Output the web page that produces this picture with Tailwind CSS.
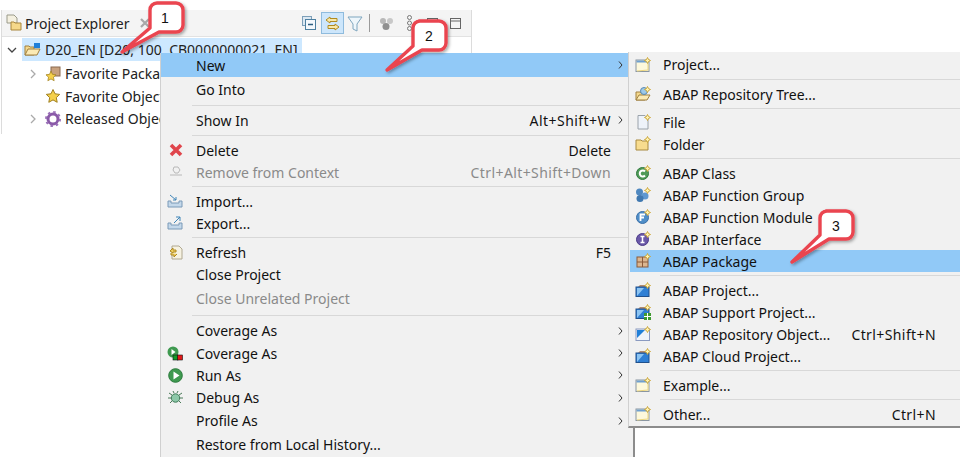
<!doctype html>
<html><head><meta charset="utf-8"><script src="https://cdn.jsdelivr.net/npm/@tailwindcss/browser@4"></script></head>
<body class="bg-white">
<svg width="0" height="0" class="absolute">
<defs>
<symbol id="plus" viewBox="0 0 16 16"><path d="M12.500 0.500l1 2 2 1-2 1-1 2-1-2-2-1 2-1z" fill="#fff3b0" stroke="#c8a030" stroke-width=".9"/></symbol>
<symbol id="win" viewBox="0 0 16 16"><rect x="1" y="3" width="13" height="11.500" fill="#fdf8dc" stroke="#8a96a2"/><rect x="1.500" y="3.500" width="12" height="2" fill="#6f9fd0"/><path d="M2 14l11-1V7" fill="none" stroke="#ecd680"/><use href="#plus"/></symbol>
<symbol id="bluebox" viewBox="0 0 16 16"><path d="M3 5l2-2h7l1 2z" fill="#b08a70"/><rect x="1" y="5" width="13" height="9.500" fill="#2f7fd4" stroke="#20508c"/><path d="M2 14V6h7z" fill="#8cc4f2"/><use href="#plus"/></symbol>
<symbol id="star" viewBox="0 0 16 16"><path d="M8 1.500l2 4.300 4.700.6-3.400 3.200.9 4.700L8 11.900l-4.200 2.400.9-4.700L1.300 6.400 6 5.800z" fill="#f5d04a" stroke="#a08020"/></symbol>
</defs>
</svg>

<main class="relative w-[960px] h-[457px] overflow-hidden font-['Noto_Sans',sans-serif] text-[14px] text-[#111] bg-white">
  <section class="w-[471px] mt-[10px] ml-[1px] border-l border-r border-[#dcdcdc]">
    <header class="h-[27px] bg-[#f4f4f4] flex items-center pl-[2px] border-b border-[#e2e2e2]">
      <svg width="18" height="18" viewBox="0 0 18 18" class="ml-[1px] shrink-0"><path d="M2 1h7l3 3v5H2z" fill="#f4f0e0" stroke="#9a9a8a"/><path d="M6 8h3l1 1h6v7H6z" fill="#f5d88a" stroke="#a8863c"/></svg>
      <span class="ml-[2px] text-[#222] whitespace-nowrap w-[108px]">Project Explorer</span>
      <svg width="12" height="12" viewBox="0 0 12 12" class="ml-[6px] shrink-0"><path d="M2 2l8 8M10 2l-8 8" stroke="#a8a8a8" stroke-width="2.200"/></svg>
      <div class="flex items-center ml-[151px] h-[22px]">
        <svg width="14" height="14" viewBox="0 0 14 14"><rect x=".5" y=".5" width="9" height="9" fill="#dce8f2" stroke="#7d9fb8"/><rect x="3.500" y="3.500" width="10" height="10" fill="#f4f8fc" stroke="#4d7fa0"/><path d="M6 8.500h5" stroke="#2f5f80" stroke-width="1.500"/></svg>
        <div class="ml-[5px] w-[23px] h-[22px] bg-[#cde6fb] border border-[#8fbbdd] flex items-center justify-center">
          <svg width="17" height="17" viewBox="0 0 17 17"><path d="M6 2L2 5l4 3V6.500h7v-3H6zM11 9l4 3-4 3v-1.500H4v-3h7z" fill="#f8e8a8" stroke="#b08a20"/></svg>
        </div>
        <svg width="16" height="17" viewBox="0 0 16 17" class="ml-[3px]"><path d="M1 2h14L10 9v7l-4-2V9z" fill="#eef6fb" stroke="#7fa6bf"/></svg>
        <div class="w-px h-[18px] bg-[#9a9a9a] ml-[6px]"></div>
        <svg width="16" height="15" viewBox="0 0 16 15" class="ml-[9px]"><circle cx="4" cy="5" r="3" fill="#b8b8b8"/><circle cx="11" cy="5" r="3" fill="#c8c8c8"/><circle cx="7" cy="10.500" r="3.500" fill="#909090"/></svg>
        <svg width="7" height="16" viewBox="0 0 7 16" class="ml-[11px]"><circle cx="3.500" cy="2.500" r="2" fill="none" stroke="#777"/><circle cx="3.500" cy="8" r="2" fill="none" stroke="#777"/><circle cx="3.500" cy="13.500" r="2" fill="none" stroke="#777"/></svg>
        <svg width="11" height="11" viewBox="0 0 11 11" class="ml-[14px]"><rect x=".5" y=".5" width="10" height="10" fill="none" stroke="#666"/><path d="M1 3h9" stroke="#666"/></svg>
        <svg width="11" height="11" viewBox="0 0 11 11" class="ml-[12px]"><rect x=".5" y=".5" width="10" height="10" fill="none" stroke="#666"/><path d="M1 3h9" stroke="#666"/></svg>
      </div>
    </header>
    <div class="bg-white h-[97px] pt-px">
      <div class="flex items-center h-[23px] w-[280px] ml-[20px] bg-[#cde8ff]">
        <span class="-ml-[15px] w-[15px] flex"><svg width="10" height="6" viewBox="0 0 10 6"><path d="M1 1l4 4 4-4" fill="none" stroke="#444" stroke-width="1.300"/></svg></span>
        <svg width="17" height="15" viewBox="0 0 17 15" class="ml-[2px]"><path d="M1 13V4h4l1 1h4v8z" fill="#f4d88c" stroke="#a08040"/><path d="M1 13l3-6h12l-3 6z" fill="#fbeab4" stroke="#a08040"/><path d="M10 1h6v5h-6z" fill="#1f7fd8"/></svg>
        <span class="ml-[4px] whitespace-nowrap text-[#222]">D20_EN [D20, 100, CB0000000021, EN]</span>
      </div>
      <div class="flex items-center h-[23px] ml-[28px] mt-[1px]">
        <svg width="6" height="10" viewBox="0 0 6 10"><path d="M1 1l4 4-4 4" fill="none" stroke="#aaa" stroke-width="1.300"/></svg>
        <svg width="16" height="16" viewBox="0 0 16 16" class="ml-[9px]"><rect x="6" y="1" width="9" height="9" fill="#c9a27e" stroke="#8a6a50"/><use href="#star" width="12" height="12" y="4"/></svg>
        <span class="ml-[4px] text-[#222]">Favorite Packages</span>
      </div>
      <div class="flex items-center h-[22px] ml-[43px]">
        <svg width="16" height="16"><use href="#star"/></svg>
        <span class="ml-[4px] text-[#222]">Favorite Objects</span>
      </div>
      <div class="flex items-center h-[23px] ml-[28px]">
        <svg width="6" height="10" viewBox="0 0 6 10"><path d="M1 1l4 4-4 4" fill="none" stroke="#aaa" stroke-width="1.300"/></svg>
        <svg width="16" height="16" viewBox="0 0 16 16" class="ml-[9px]"><circle cx="8" cy="8" r="5" fill="none" stroke="#8a5aa8" stroke-width="3"/><circle cx="8" cy="8" r="7" fill="none" stroke="#9a70b8" stroke-width="2" stroke-dasharray="2.500 3"/></svg>
        <span class="ml-[4px] text-[#222]">Released Objects</span>
      </div>
    </div>
  </section>

  <!-- main context menu -->
  <nav class="absolute left-[160px] top-[53px] w-[475px] h-[420px] bg-[#f1f1f1] border-l border-r-2 border-l-[#d0d0d0] border-r-[#8c8c8c]">
    <div class="flex items-center h-[24px] bg-[#91c9f7] pr-[10px]"><span class="pl-[35px] flex-1">New</span><svg width="5" height="8" viewBox="0 0 5 8"><path d="M1 .5l3 3.500-3 3.500" fill="none" stroke="#333"/></svg></div>
    <div class="flex items-center h-[24px]"><span class="pl-[35px]">Go Into</span></div>
    <div class="h-[8px] flex items-center pl-[31px]"><div class="h-px w-full bg-[#d8d8d8]"></div></div>
    <div class="flex items-center h-[22px] pr-[10px]"><span class="pl-[35px] flex-1">Show In</span><span class="mr-[7px] tracking-[.45px]">Alt+Shift+W</span><svg width="5" height="8" viewBox="0 0 5 8"><path d="M1 .5l3 3.500-3 3.500" fill="none" stroke="#333"/></svg></div>
    <div class="h-[8px] flex items-center pl-[31px]"><div class="h-px w-full bg-[#d8d8d8]"></div></div>
    <div class="flex items-center h-[22px] pr-[22px]"><svg width="14" height="14" viewBox="0 0 14 14" class="ml-[8px]"><path d="M2 2l10 10M12 2L2 12" stroke="#e0454c" stroke-width="3.600"/></svg><span class="pl-[13px] flex-1">Delete</span><span>Delete</span></div>
    <div class="flex items-center h-[22px] pr-[22px] text-[#8a8a8a]"><svg width="14" height="14" viewBox="0 0 14 14" class="ml-[8px]"><path d="M5 2h4l2 3-2 3H6L4 5zM1 10h12" fill="none" stroke="#b8b8b8"/></svg><span class="pl-[13px] flex-1">Remove from Context</span><span class="tracking-[.4px]">Ctrl+Alt+Shift+Down</span></div>
    <div class="h-[7px] flex items-center pl-[31px]"><div class="h-px w-full bg-[#d8d8d8]"></div></div>
    <div class="flex items-center h-[22px]"><svg width="16" height="14" viewBox="0 0 16 14" class="ml-[6px]"><path d="M1 7v6h14V7h-3v2H4V7z" fill="#c4d8ea" stroke="#7a9ab8"/><path d="M3 1l6 5M9 3v3H6" fill="none" stroke="#3f85b8"/></svg><span class="pl-[13px]">Import...</span></div>
    <div class="flex items-center h-[22px]"><svg width="16" height="14" viewBox="0 0 16 14" class="ml-[6px]"><path d="M1 7v6h14V7h-3v2H4V7z" fill="#c4d8ea" stroke="#7a9ab8"/><path d="M7 7l6-6M9 1h4v4" fill="none" stroke="#3f85b8"/></svg><span class="pl-[13px]">Export...</span></div>
    <div class="h-[7px] flex items-center pl-[31px]"><div class="h-px w-full bg-[#d8d8d8]"></div></div>
    <div class="flex items-center h-[22px] pr-[22px]"><svg width="15" height="15" viewBox="0 0 15 15" class="ml-[7px]"><path d="M4 1h7l3 3v10H4z" fill="#f6f2e2" stroke="#b0a890"/><path d="M2 6l3-3v2h3v2H5v1zM9 9l-3 3v-2H3V8" fill="#f0cf60" stroke="#b08a20"/></svg><span class="pl-[13px] flex-1">Refresh</span><span>F5</span></div>
    <div class="flex items-center h-[23px]"><span class="pl-[35px]">Close Project</span></div>
    <div class="flex items-center h-[25px] text-[#8a8a8a]"><span class="pl-[35px]">Close Unrelated Project</span></div>
    <div class="h-[8px] flex items-center pl-[31px]"><div class="h-px w-full bg-[#d8d8d8]"></div></div>
    <div class="flex items-center h-[23px] pr-[10px]"><span class="pl-[35px] flex-1">Coverage As</span><svg width="5" height="8" viewBox="0 0 5 8"><path d="M1 .5l3 3.500-3 3.500" fill="none" stroke="#333"/></svg></div>
    <div class="flex items-center h-[22px] pr-[10px]"><svg width="16" height="15" viewBox="0 0 16 15" class="ml-[6px]"><circle cx="6" cy="6" r="5.500" fill="#3f9a50"/><path d="M4.500 3v6l4-3z" fill="#fff"/><rect x="6" y="9" width="5" height="5" fill="#139a2a" stroke="#111" stroke-width=".6"/><rect x="10.500" y="9" width="5" height="5" fill="#e01818" stroke="#111" stroke-width=".6"/></svg><span class="pl-[13px] flex-1">Coverage As</span><svg width="5" height="8" viewBox="0 0 5 8"><path d="M1 .5l3 3.500-3 3.500" fill="none" stroke="#333"/></svg></div>
    <div class="flex items-center h-[22px] pr-[10px]"><svg width="15" height="15" viewBox="0 0 15 15" class="ml-[7px]"><circle cx="7.500" cy="7.500" r="6.800" fill="#3f9a50" stroke="#2a7a3c"/><path d="M5.500 3.500v8l6-4z" fill="#fff"/></svg><span class="pl-[13px] flex-1">Run As</span><svg width="5" height="8" viewBox="0 0 5 8"><path d="M1 .5l3 3.500-3 3.500" fill="none" stroke="#333"/></svg></div>
    <div class="flex items-center h-[23px] pr-[10px]"><svg width="15" height="15" viewBox="0 0 15 15" class="ml-[7px]"><path d="M1 3l3 2M14 3l-3 2M0 8h3M15 8h-3M2 13l2-2M13 13l-2-2M5 1l1 2M10 1L9 3" stroke="#4a7a58"/><circle cx="7.500" cy="8" r="4.200" fill="#8cc8a8" stroke="#3f7a58"/></svg><span class="pl-[13px] flex-1">Debug As</span><svg width="5" height="8" viewBox="0 0 5 8"><path d="M1 .5l3 3.500-3 3.500" fill="none" stroke="#333"/></svg></div>
    <div class="flex items-center h-[23px] pr-[10px]"><span class="pl-[35px] flex-1">Profile As</span><svg width="5" height="8" viewBox="0 0 5 8"><path d="M1 .5l3 3.500-3 3.500" fill="none" stroke="#333"/></svg></div>
    <div class="flex items-center h-[24px]"><span class="pl-[35px]">Restore from Local History...</span></div>
  </nav>

  <!-- submenu -->
  <nav class="absolute left-[628px] top-[52px] w-[332px] h-[376px] bg-[#f1f1f1] border-l border-b-2 border-l-[#d0d0d0] border-b-[#8c8c8c] pt-[2px]">
    <div class="flex items-center h-[22px]"><svg width="16" height="16" class="ml-[6px]"><use href="#win"/></svg><span class="pl-[12px] -mt-[1px]">Project...</span></div>
    <div class="h-[7px] flex items-center pl-[31px]"><div class="h-px w-full bg-[#d8d8d8]"></div></div>
    <div class="flex items-center h-[22px]"><svg width="16" height="16" viewBox="0 0 16 16" class="ml-[6px]"><path d="M1 14V6h4l1 1h4v7z" fill="#f4d88c" stroke="#a08040"/><path d="M1 14l3-5h11l-3 5z" fill="#fbeab4" stroke="#a08040"/><circle cx="9" cy="5" r="3.500" fill="#9cc8ea" stroke="#5a8ab0"/><use href="#plus"/></svg><span class="pl-[12px]">ABAP Repository Tree...</span></div>
    <div class="h-[6px] flex items-center pl-[31px]"><div class="h-px w-full bg-[#d8d8d8]"></div></div>
    <div class="flex items-center h-[22px]"><svg width="16" height="16" viewBox="0 0 16 16" class="ml-[6px]"><path d="M3 1.500h7l3 3v10.500H3z" fill="#eef3fa" stroke="#9aa2aa"/><use href="#plus"/></svg><span class="pl-[12px]">File</span></div>
    <div class="flex items-center h-[22px]"><svg width="16" height="16" viewBox="0 0 16 16" class="ml-[6px]"><path d="M1 14V4h5l1 1h6v9z" fill="#f8dc8e" stroke="#a88a40"/><use href="#plus"/></svg><span class="pl-[12px]">Folder</span></div>
    <div class="h-[7px] flex items-center pl-[31px]"><div class="h-px w-full bg-[#d8d8d8]"></div></div>
    <div class="flex items-center h-[22px]"><svg width="16" height="16" viewBox="0 0 16 16" class="ml-[6px]"><circle cx="7.500" cy="8.500" r="6" fill="#4f9a58" stroke="#2f7a3c"/><path d="M10 6.500a3 3 0 1 0 0 4" fill="none" stroke="#fff" stroke-width="2"/><use href="#plus"/></svg><span class="pl-[12px]">ABAP Class</span></div>
    <div class="flex items-center h-[22px]"><svg width="16" height="16" viewBox="0 0 16 16" class="ml-[6px]"><circle cx="4.500" cy="5" r="3.500" fill="#4f88c0"/><circle cx="10" cy="9" r="3.500" fill="#5f98d0"/><circle cx="5" cy="11.500" r="3.500" fill="#3f78b0"/><use href="#plus"/></svg><span class="pl-[12px]">ABAP Function Group</span></div>
    <div class="flex items-center h-[22px]"><svg width="16" height="16" viewBox="0 0 16 16" class="ml-[6px]"><circle cx="7.500" cy="8.500" r="6" fill="#4f8ec8" stroke="#3a70a8"/><path d="M5.500 12V5.500h4.500M5.500 8.500h3.500" fill="none" stroke="#fff" stroke-width="1.800"/><use href="#plus"/></svg><span class="pl-[12px]">ABAP Function Module</span></div>
    <div class="flex items-center h-[22px]"><svg width="16" height="16" viewBox="0 0 16 16" class="ml-[6px]"><circle cx="7.500" cy="8.500" r="6" fill="#6a58a8" stroke="#4a3a88"/><path d="M5.500 5.500h4M7.500 5.500v6M5.500 11.500h4" fill="none" stroke="#fff" stroke-width="1.500"/><use href="#plus"/></svg><span class="pl-[12px]">ABAP Interface</span></div>
    <div class="flex items-center h-[22px] ml-[1px] bg-[#91c9f7]"><svg width="16" height="16" viewBox="0 0 16 16" class="ml-[5px]"><rect x="2" y="4" width="11" height="10" fill="#dcb690" stroke="#8a5a3a"/><path d="M7.500 4v10M2 9h11" stroke="#8a5a3a"/><use href="#plus"/></svg><span class="pl-[12px]">ABAP Package</span></div>
    <div class="h-[7px] flex items-center pl-[31px]"><div class="h-px w-full bg-[#d8d8d8]"></div></div>
    <div class="flex items-center h-[22px]"><svg width="16" height="16" class="ml-[6px]"><use href="#bluebox"/></svg><span class="pl-[12px]">ABAP Project...</span></div>
    <div class="flex items-center h-[22px]"><svg width="16" height="16" viewBox="0 0 16 16" class="ml-[6px]"><use href="#bluebox"/><rect x="9" y="9" width="7" height="7" fill="#3f9a30"/><path d="M12.500 9v7M9 12.500h7" stroke="#fff"/></svg><span class="pl-[12px]">ABAP Support Project...</span></div>
    <div class="flex items-center h-[22px]"><svg width="16" height="16" viewBox="0 0 16 16" class="ml-[6px]"><rect x="1" y="3" width="13.500" height="11.500" fill="#eef3fa" stroke="#8a9ac0"/><path d="M2 4h8L2 12z" fill="#1f7fd8"/><use href="#plus"/></svg><span class="pl-[12px] flex-1">ABAP Repository Object...</span><span class="mr-[24px] tracking-[.4px]">Ctrl+Shift+N</span></div>
    <div class="flex items-center h-[22px]"><svg width="16" height="16" class="ml-[6px]"><use href="#bluebox"/></svg><span class="pl-[12px]">ABAP Cloud Project...</span></div>
    <div class="h-[7px] flex items-center pl-[31px]"><div class="h-px w-full bg-[#d8d8d8]"></div></div>
    <div class="flex items-center h-[22px]"><svg width="16" height="16" class="ml-[6px]"><use href="#win"/></svg><span class="pl-[12px]">Example...</span></div>
    <div class="h-[7px] flex items-center pl-[31px]"><div class="h-px w-full bg-[#d8d8d8]"></div></div>
    <div class="flex items-center h-[22px]"><svg width="16" height="16" class="ml-[6px]"><use href="#win"/></svg><span class="pl-[12px] flex-1">Other...</span><span class="mr-[24px] tracking-[.4px]">Ctrl+N</span></div>
  </nav>

  <!-- numbered callouts -->
  <svg class="absolute inset-0 font-['Liberation_Sans',sans-serif] text-[14px]" width="960" height="457" viewBox="0 0 960 457">
    <defs><filter id="sh" x="-30%" y="-30%" width="170%" height="170%"><feDropShadow dx="1.500" dy="1.500" stdDeviation="1.500" flood-color="#000" flood-opacity=".35"/></filter></defs>
    <g fill="#fff" stroke="#ea4450" stroke-width="3.400" stroke-linejoin="round" filter="url(#sh)">
      <path d="M157 3h19a7 7 0 0 1 7 7v15a7 7 0 0 1-7 7h-17l-37 20 28-24V10a7 7 0 0 1 7-7z"/>
      <path d="M419 21h20a7 7 0 0 1 7 7v15a7 7 0 0 1-7 7h-17l-35 20 26-24V28a7 7 0 0 1 7-7z"/>
      <path d="M826 211h20a7 7 0 0 1 7 7v14a7 7 0 0 1-7 7h-17l-37 23 28-27v-17a7 7 0 0 1 7-7z"/>
    </g>
    <text x="165" y="23" text-anchor="middle" fill="#111">1</text>
    <text x="429" y="41" text-anchor="middle" fill="#111">2</text>
    <text x="836" y="231" text-anchor="middle" fill="#111">3</text>
  </svg>
</main>
</body></html>
